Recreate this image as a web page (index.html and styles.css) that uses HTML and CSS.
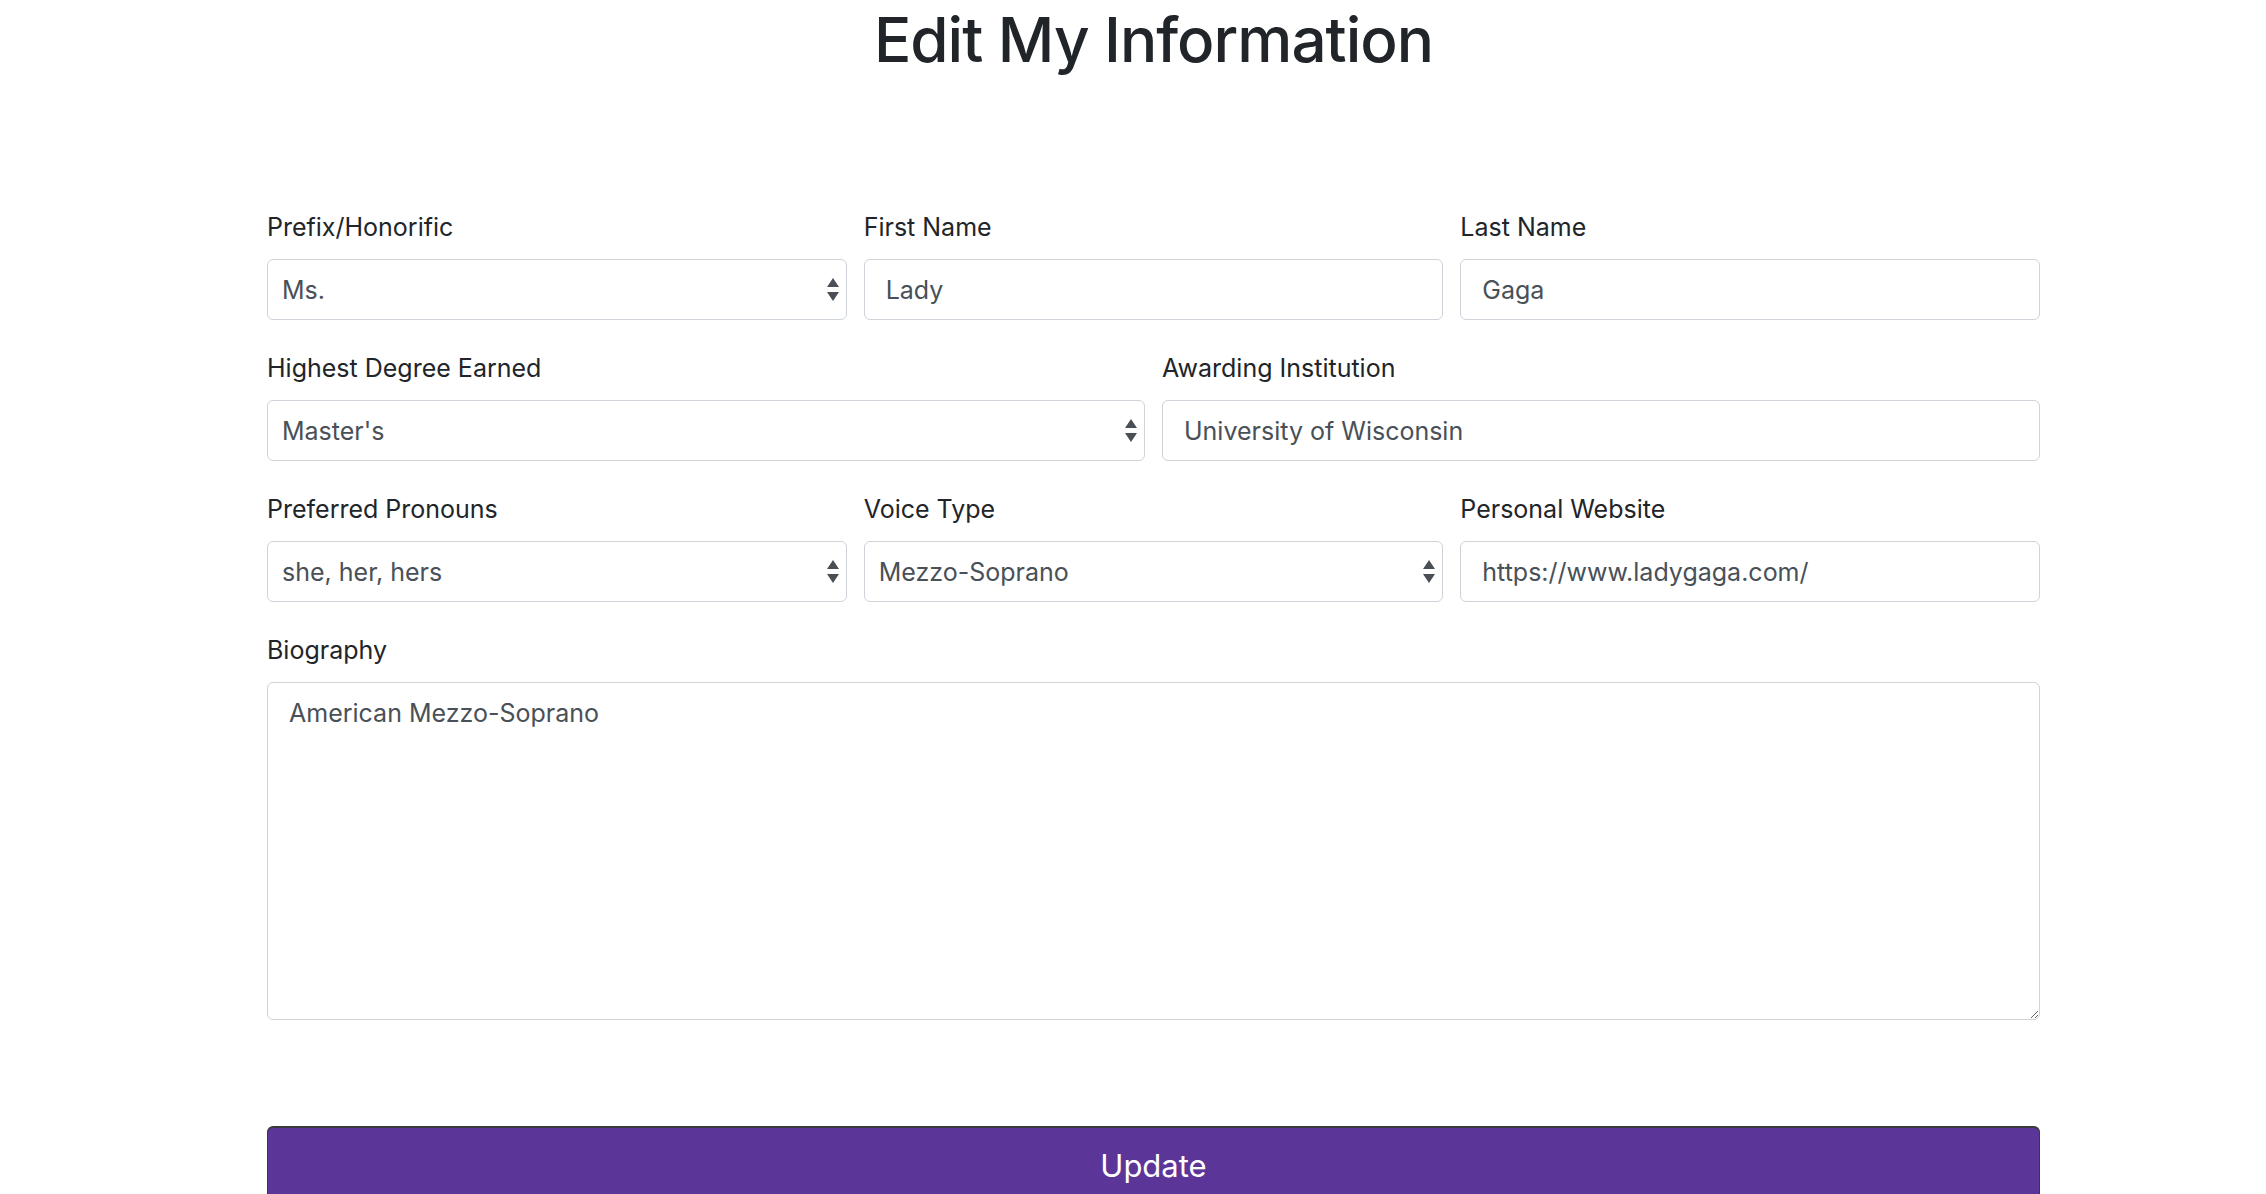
FILE: index.html
```html
<!DOCTYPE html>
<html lang="en">
<head>
<meta charset="utf-8">
<title>Edit My Information</title>
<link rel="stylesheet" href="styles.css">
</head>
<body>
<div class="page">
  <h1 class="title">Edit My Information</h1>
  <form class="form">
    <div class="row row-3">
      <div class="group">
        <label class="label">Prefix/Honorific</label>
        <div class="select-wrap">
          <select class="control select"><option>Ms.</option></select>
          <svg class="arrows" width="12" height="23" viewBox="0 0 12 23"><path d="M6 0 L12 9 L0 9 Z M0 14 L12 14 L6 23 Z" fill="#4a4f55"/></svg>
        </div>
      </div>
      <div class="group">
        <label class="label">First Name</label>
        <input class="control input" type="text" value="Lady">
      </div>
      <div class="group">
        <label class="label">Last Name</label>
        <input class="control input" type="text" value="Gaga">
      </div>
    </div>
    <div class="row row-2">
      <div class="group">
        <label class="label">Highest Degree Earned</label>
        <div class="select-wrap">
          <select class="control select"><option>Master's</option></select>
          <svg class="arrows" width="12" height="23" viewBox="0 0 12 23"><path d="M6 0 L12 9 L0 9 Z M0 14 L12 14 L6 23 Z" fill="#4a4f55"/></svg>
        </div>
      </div>
      <div class="group">
        <label class="label">Awarding Institution</label>
        <input class="control input" type="text" value="University of Wisconsin">
      </div>
    </div>
    <div class="row row-3">
      <div class="group">
        <label class="label">Preferred Pronouns</label>
        <div class="select-wrap">
          <select class="control select"><option>she, her, hers</option></select>
          <svg class="arrows" width="12" height="23" viewBox="0 0 12 23"><path d="M6 0 L12 9 L0 9 Z M0 14 L12 14 L6 23 Z" fill="#4a4f55"/></svg>
        </div>
      </div>
      <div class="group">
        <label class="label">Voice Type</label>
        <div class="select-wrap">
          <select class="control select"><option>Mezzo-Soprano</option></select>
          <svg class="arrows" width="12" height="23" viewBox="0 0 12 23"><path d="M6 0 L12 9 L0 9 Z M0 14 L12 14 L6 23 Z" fill="#4a4f55"/></svg>
        </div>
      </div>
      <div class="group">
        <label class="label">Personal Website</label>
        <input class="control input" type="text" value="https://www.ladygaga.com/">
      </div>
    </div>
    <div class="group">
      <label class="label">Biography</label>
      <textarea class="control textarea">American Mezzo-Soprano</textarea>
    </div>
    <button class="button" type="button">Update</button>
  </form>
</div>
</body>
</html>
```

FILE: styles.css
```css
* {
  box-sizing: border-box;
}

html, body {
  margin: 0;
  padding: 0;
  background: #ffffff;
}

body {
  font-family: Inter, "Noto Sans", "Liberation Sans", sans-serif;
  color: #212529;
  overflow: hidden;
}

.page {
  padding: 0 226px 0 267px;
}

.title {
  margin: 4px 0 0;
  font-size: 62px;
  line-height: 72px;
  font-weight: 500;
  text-align: center;
  color: #212529;
  letter-spacing: -1px;
}

.form {
  padding-top: 133px;
}

.row {
  display: grid;
  column-gap: 17px;
}

.row-3 {
  grid-template-columns: 1fr 1fr 1fr;
}

.row-2 {
  grid-template-columns: 1fr 1fr;
}

.group {
  margin-bottom: 30px;
}

.label {
  display: block;
  font-size: 25px;
  line-height: 36px;
  margin-bottom: 14px;
  color: #212529;
}

.control {
  display: block;
  width: 100%;
  font-family: inherit;
  font-size: 25px;
  color: #495057;
  background: #ffffff;
  border: 1px solid #ced4da;
  border-radius: 6px;
  outline: none;
}

.input {
  height: 61px;
  padding: 0 21px;
}

.select-wrap {
  position: relative;
}

.select {
  height: 61px;
  padding: 0 40px 0 14px;
  appearance: none;
  -webkit-appearance: none;
}

.arrows {
  position: absolute;
  right: 8px;
  top: 19px;
  pointer-events: none;
}

.textarea {
  height: 338px;
  padding: 12px 21px;
  line-height: 36px;
  resize: vertical;
}

.button {
  display: block;
  width: 100%;
  margin-top: 106px;
  height: 78px;
  font-family: inherit;
  font-size: 31px;
  color: #ffffff;
  background: #5b3598;
  border: 1px solid #3a3a3a;
  border-top-width: 2px;
  border-radius: 6px;
}
```
